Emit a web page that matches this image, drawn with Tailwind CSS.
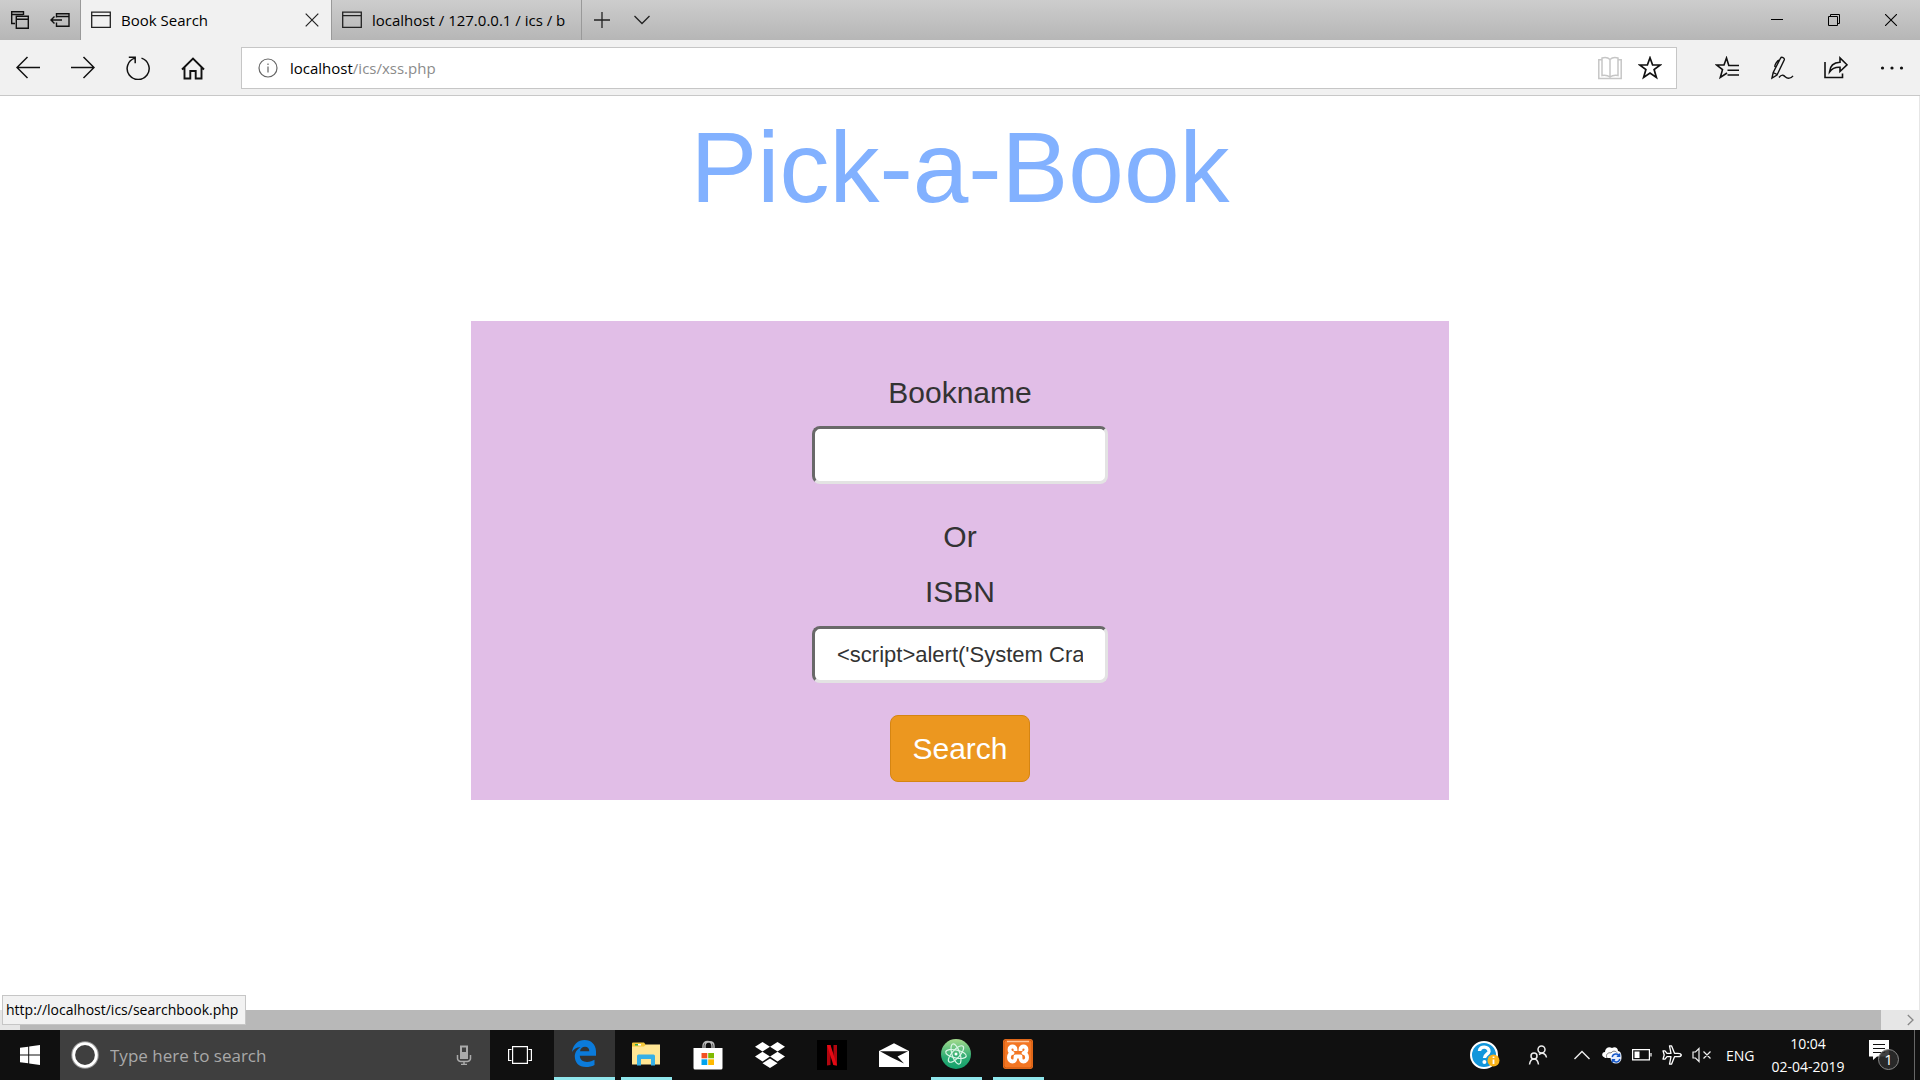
<!DOCTYPE html>
<html lang="en">
<head>
<meta charset="utf-8">
<title>Book Search</title>
<meta name="viewport" content="width=device-width, initial-scale=1">
<script src="https://cdn.jsdelivr.net/npm/@tailwindcss/browser@4"></script>
</head>
<body class="flex min-h-screen flex-col bg-white font-['Open_Sans','Noto_Sans',sans-serif] text-[14px] text-black">

<!-- Tab strip -->
<header class="text-[15px]">
  <div class="flex h-10 items-stretch bg-linear-to-b from-[#cdcdcd] to-[#b6b6b6]">
    <div class="flex w-20 items-center justify-between pr-2 pl-2">
      <button class="flex size-6 items-center justify-center" aria-label="Tabs you've set aside">
        <svg class="size-5" viewBox="0 0 20 20" fill="none" stroke="#111" stroke-width="1.4"><path d="M5 13.5H1.7V1.7H13.5V5M1.7 4.5H13"/><path d="M6.3 6.3H18.3V18.3H6.3ZM6.3 9.2H18.3"/></svg>
      </button>
      <button class="flex size-6 items-center justify-center" aria-label="Set these tabs aside">
        <svg class="size-5" viewBox="0 0 20 20" fill="none" stroke="#111" stroke-width="1.4"><path d="M6.500 7.500V3.700H19V16.300H6.500V12.500M6.500 6.500H19M1 10H12M4.500 6.500L1 10L4.500 13.500"/></svg>
      </button>
    </div>
    <div class="flex w-[251px] items-center border-l border-[#999] bg-[#f1f1f1] pr-[9px] pl-[10px]">
      <svg class="h-[18px] w-5 shrink-0" viewBox="0 0 20 18" fill="none" stroke="#222" stroke-width="1.3"><path d="M.7 1.200H19.300V16.300H.7ZM.7 4.600H19.300"/></svg>
      <span class="ml-[10px] flex-1 truncate">Book Search</span>
      <button class="flex size-5 items-center justify-center" aria-label="Close tab">
        <svg class="size-[14px]" viewBox="0 0 14 14" stroke="#222" stroke-width="1.2"><path d="M.7.7L13.300 13.300M13.300.7L.7 13.300"/></svg>
      </button>
    </div>
    <div class="flex w-[251px] items-center border-x border-[#999] pr-[10px] pl-[10px]">
      <svg class="h-[18px] w-5 shrink-0" viewBox="0 0 20 18" fill="none" stroke="#222" stroke-width="1.3"><path d="M.7 1.200H19.300V16.300H.7ZM.7 4.600H19.300"/></svg>
      <span class="ml-[10px] flex-1 overflow-hidden whitespace-nowrap">localhost / 127.0.0.1 / ics / b</span>
    </div>
    <button class="flex w-10 items-center justify-center" aria-label="New tab">
      <svg class="size-4" viewBox="0 0 16 16" stroke="#222" stroke-width="1.3"><path d="M8 0V16M0 8H16"/></svg>
    </button>
    <button class="flex w-10 items-center justify-center" aria-label="Show tab previews">
      <svg class="size-4" viewBox="0 0 16 16" fill="none" stroke="#222" stroke-width="1.3"><path d="M.5 4L8 11.500L15.500 4"/></svg>
    </button>
    <div class="ml-auto flex pr-px">
      <button class="flex w-[57px] items-center justify-center" aria-label="Minimize"><svg class="size-3" viewBox="0 0 12 12" stroke="#000" stroke-width="1"><path d="M0 5.500H12"/></svg></button>
      <button class="flex w-[57px] items-center justify-center" aria-label="Restore"><svg class="size-3" viewBox="0 0 12 12" fill="none" stroke="#000" stroke-width="1"><path d="M.5 2.500H9.500V11.500H.5ZM2.500 2.500V.5H11.500V9.500H9.500"/></svg></button>
      <button class="flex w-[57px] items-center justify-center" aria-label="Close"><svg class="size-3" viewBox="0 0 12 12" stroke="#000" stroke-width="1.1"><path d="M0 0L12 12M12 0L0 12"/></svg></button>
    </div>
  </div>

  <!-- Navigation bar -->
  <div class="flex h-14 items-center border-b border-[#c8c8c8] bg-[#f1f1f1]">
    <nav class="flex" aria-label="Browser navigation">
      <button class="flex h-10 w-[55px] items-center justify-center" aria-label="Back"><svg class="size-6" viewBox="0 0 24 24" fill="none" stroke="#111" stroke-width="1.5"><path d="M24 11.500H1M11.500 1L1 11.500L11.500 22"/></svg></button>
      <button class="flex h-10 w-[55px] items-center justify-center" aria-label="Forward"><svg class="size-6" viewBox="0 0 24 24" fill="none" stroke="#111" stroke-width="1.5"><path d="M0 11.500H23M12.500 1L23 11.500L12.500 22"/></svg></button>
      <button class="flex h-10 w-[55px] items-center justify-center" aria-label="Refresh"><svg class="size-6" viewBox="0 0 24 24" fill="none" stroke="#111" stroke-width="1.500"><path d="M15.500 2.100A11 11 0 1 1 8.800 2.100M2.800 1.200H9.200V7.200"/></svg></button>
      <button class="flex h-10 w-[55px] items-center justify-center" aria-label="Home"><svg class="size-6" viewBox="0 0 24 24" fill="none" stroke="#111" stroke-width="1.900"><path d="M1 13.500L12 2.500L23 13.500M3.500 11.500V22.500H9.300V15H14.700V22.500H20.500V11.500"/></svg></button>
    </nav>
    <form class="ml-[21px] flex h-[42px] flex-1 items-center border border-[#c6c6c6] bg-white">
      <button type="button" class="ml-4 flex size-5 items-center justify-center" aria-label="Site information"><svg class="size-5" viewBox="0 0 20 20" fill="none" stroke="#666" stroke-width="1.200"><circle cx="10" cy="10" r="9"/><path d="M10 8.500V14.500M10 5.500V7"/></svg></button>
      <div class="ml-3 flex-1 pt-0.5" role="textbox" aria-label="Address" contenteditable="true" spellcheck="false">localhost<span class="text-[#8b8b8b]">/ics/xss.php</span></div>
      <button type="button" class="flex w-10 items-center justify-center" aria-label="Reading view"><svg class="size-6" viewBox="0 0 24 24" fill="none" stroke="#c6c6c6" stroke-width="1.500"><path d="M12 3.500C10 1.500 6 1.500 4 2V19.500C7 19 10 19.500 12 21C14 19.500 17 19 20 19.500V2C18 1.500 14 1.500 12 3.500V21M4 3.800H.8V22.500H23.200V3.800H20"/></svg></button>
      <button type="button" class="mr-[6px] flex w-10 items-center justify-center" aria-label="Add to favorites"><svg class="size-6" viewBox="0 0 24 24" fill="none" stroke="#111" stroke-width="1.700"><path d="M12 1.800L14.600 9H22.300L16.100 13.600L18.400 21.500L12 17L5.600 21.500L7.900 13.600L1.700 9H9.400Z"/></svg></button>
    </form>
    <div class="ml-[22px] flex">
      <button class="flex h-10 w-[55px] items-center justify-center" aria-label="Hub"><svg class="size-6" viewBox="0 0 24 24" fill="none" stroke="#111" stroke-width="1.600"><path d="M24 9.500H13.800L11.500 2L9 9H1.500L7.500 13.600L5.300 21.500L12 17M12.500 14.200H24M12.500 19H24"/></svg></button>
      <button class="flex h-10 w-[55px] items-center justify-center" aria-label="Add notes"><svg class="size-6" viewBox="0 0 24 24" fill="none" stroke="#111" stroke-width="1.400"><path d="M2 22L3.200 16.500L10.500 2.300C11.500 .3 15 1.700 14.200 4L7 19L2 22ZM3.200 16.500L7 18.500M5 11C4.200 9.500 7 4.500 9.500 4M9 21.500C12 17.500 14 19.500 15.500 21C17.500 23 21 22.500 23 19.800"/></svg></button>
      <button class="flex h-10 w-[54px] items-center justify-center" aria-label="Share"><svg class="size-6" viewBox="0 0 24 24" fill="none" stroke="#111" stroke-width="1.600"><path d="M1 6V21.500H18.500V17.500M5.500 16C6 10 10 6.500 16 6.300V2L23 8.800L16 15.500V11.300C11 11 8 12.500 5.500 16Z"/></svg></button>
      <button class="flex h-10 w-[57px] items-center justify-center" aria-label="Settings and more"><svg class="size-6" viewBox="0 0 24 24" fill="#111"><circle cx="2.500" cy="12" r="1.600"/><circle cx="12" cy="12" r="1.600"/><circle cx="21.500" cy="12" r="1.600"/></svg></button>
    </div>
  </div>
</header>

<!-- Web page -->
<main class="flex flex-1 flex-col items-center pt-4 font-['Liberation_Sans',Arial,sans-serif] text-[30px] leading-[43px] text-[#333] shadow-[inset_-1px_0_#e6e6e6]">
  <h1 class="text-[100px] leading-[110px] text-[#82b1ff]">Pick-a-Book</h1>
  <form class="mt-[99px] flex w-[50.9%] flex-col items-center bg-[#e1bee7] pt-[50px] pb-[18px]">
    <label for="bookname">Bookname</label>
    <input id="bookname" type="text" class="mt-3 h-[58px] w-[296px] rounded-lg border-3 border-t-[#696969] border-r-[#e3e3e3] border-b-[#e3e3e3] border-l-[#696969] bg-white px-[22px] text-[22px]">
    <p class="mt-[31px]">Or</p>
    <label for="isbn" class="mt-3">ISBN</label>
    <input id="isbn" type="text" value="&lt;script&gt;alert('System Crash')&lt;/script&gt;" class="mt-[13px] h-[57px] w-[296px] rounded-lg border-3 border-t-[#696969] border-r-[#e3e3e3] border-b-[#e3e3e3] border-l-[#696969] bg-white px-[22px] text-[22px]">
    <button type="button" class="mt-8 h-[67px] rounded-lg border border-[#d58512] bg-[#ec971f] px-[21px] text-white">Search</button>
  </form>
</main>

<!-- Horizontal scrollbar, with the link preview over its left end -->
<div class="relative flex h-5 bg-[#e6e6e6] pl-5">
  <div class="flex-1 bg-[#b8b8b8]"></div>
  <button class="flex w-[39px] items-center justify-end pr-[6px]" aria-label="Scroll right"><svg class="h-3 w-[7px]" viewBox="0 0 7 12" fill="none" stroke="#888" stroke-width="1.300"><path d="M.8 1L6 6L.8 11"/></svg></button>
  <div class="absolute bottom-[5px] left-[2px] flex h-[30px] items-center border border-[#c6c6c6] bg-[#f2f2f2] pr-[7px] pb-0.5 pl-[3px]">http://localhost/ics/searchbook.php</div>
</div>

<!-- Taskbar -->
<footer class="flex h-[50px] items-stretch bg-[#101010] text-white">
  <button class="flex w-[60px] items-center justify-center" aria-label="Start"><svg class="size-5" viewBox="0 0 20 20" fill="#fff"><path d="M0 2.800L8.200 1.700V9.500H0ZM9.200 1.500L20 0V9.500H9.200ZM0 10.500H8.200V18.300L0 17.200ZM9.200 10.500H20V20L9.200 18.500Z"/></svg></button>
  <div class="flex w-[430px] items-center bg-[#3f3f3f] pr-4 pl-[11px]">
    <svg class="size-7 shrink-0" viewBox="0 0 28 28" fill="none"><circle cx="14" cy="14" r="12.500" stroke="#999" stroke-width="2.500"/><circle cx="14" cy="14" r="11.300" stroke="#fff" stroke-width="2.800"/></svg>
    <input type="text" aria-label="Type here to search" placeholder="Type here to search" class="ml-[11px] min-w-0 flex-1 pt-0.5 text-[17px] placeholder:text-[#a9a9a9]">
    <button class="flex size-5 items-center justify-center" aria-label="Voice search"><svg class="h-5 w-4" viewBox="0 0 16 20" fill="none" stroke="#aaa"><path d="M4 .5H12V14H4Z" fill="#aaa" stroke="none"/><path d="M6 2.500H10V7H6Z" fill="#3f3f3f" stroke="none"/><path d="M1.500 10V13.500C1.500 15.500 2.500 16 4.500 16.500H11.500C13.500 16 14.500 15.500 14.500 13.500V10M8 16.500V19M5 19.500H11" stroke-width="1.500"/></svg></button>
  </div>
  <button class="flex w-16 items-center justify-center pr-1" aria-label="Task view"><svg class="h-5 w-6 " viewBox="0 0 24 20" fill="none" stroke="#fff" stroke-width="1.200"><path d="M4.600 1.600H19.400V18.400H4.600ZM3.500 4.500H.6V15.500H3.500M20.500 4.500H23.400V15.500H20.500"/></svg></button>

  <div class="flex gap-[11px] [&>button]:pr-0.5">
    <button class="flex w-[61px] items-center justify-center border-b-3 border-[#8fe6ec] bg-[#333]" aria-label="Microsoft Edge"><svg class="h-[27px] w-6" viewBox="0 0 24 27" fill="#0b7bdb"><path d="M0 12C1 4.500 6 0 12.500 0C20 0 24.300 5.500 24 12.500V15.800H7.800C8 20 11 22 15 22C18 22 20.500 21 22.500 19.800V25C20 26.400 17 27 14 27C6.500 27 2.800 22.300 2.800 16.500C2.800 12.500 5 9 8.600 7.200C5 7 2 8.500 0 12ZM8 11.200H17.300C17.300 8.500 15.800 6.800 13 6.800C10.300 6.800 8.300 8.700 8 11.200Z"/></svg></button>
    <button class="-ml-[5px] flex w-[51px] items-center justify-center border-b-3 border-[#8fe6ec]" aria-label="File Explorer"><svg class="h-6 w-7" viewBox="0 0 28 24"><path d="M0 1.500Q0 .5 1 .5H12L14 3H28V22H0Z" fill="#f5c93a"/><path d="M0 4.500H12L14 2.500H28V22.500H0Z" fill="#ffe694"/><path d="M3 2H6.500V3.500H3Z" fill="#35a853"/><path d="M6 2H9V3.500H6Z" fill="#fff"/><path d="M5 23.500V14Q5 12.500 6.500 12.500H21.500Q23 12.500 23 14V23.500H19V17H9V23.500Z" fill="#36b0e6"/></svg></button>
    <button class="flex w-[51px] items-center justify-center" aria-label="Microsoft Store"><svg class="h-[30px] w-[30px]" viewBox="0 0 30 30" fill="none"><path d="M10 9V6C10 0 19 0 19 6V9M12 9V5.500C12.500 .5 21 .5 21 6V9" stroke="#bbb" stroke-width="1.400"/><path d="M.5 8H29.500V28Q29.500 29.500 28 29.500H2Q.5 29.500 .5 28Z" fill="#fff"/><path d="M8.500 13H14.300V18.300H8.500Z" fill="#f25022"/><path d="M15.200 13H21V18.300H15.200Z" fill="#7fba00"/><path d="M8.500 19.300H14.300V25H8.500Z" fill="#00a4ef"/><path d="M15.200 19.300H21V25H15.200Z" fill="#ffb900"/></svg></button>
    <button class="flex w-[51px] items-center justify-center" aria-label="Dropbox"><svg class="h-[26px] w-[30px]" viewBox="0 0 30 26" fill="#fff"><path d="M7.500 0L15 4.800L7.500 9.500L0 4.800ZM22.500 0L30 4.800L22.500 9.500L15 4.800ZM7.500 9.800L15 14.600L7.500 19.400L0 14.600ZM22.500 9.800L30 14.600L22.500 19.400L15 14.600ZM15 16.500L22.500 21.200L15 26L7.500 21.200Z"/></svg></button>
    <button class="flex w-[51px] items-center justify-center" aria-label="Netflix"><svg class="size-[30px]" viewBox="0 0 30 30"><path d="M0 0H30V30H0Z" fill="#000"/><path d="M10 5H13.500V25L10 25.500ZM16.500 5H20V25.500L16.500 25Z" fill="#b1060f"/><path d="M10 5H13.500L20 25.500L16.300 25Z" fill="#e50914"/></svg></button>
    <button class="flex w-[51px] items-center justify-center" aria-label="Mail"><svg class="h-6 w-[30px]" viewBox="0 0 30 24"><path d="M0 8L15 .3L30 8V24H0Z" fill="#fff"/><path d="M1 8.200H29L18.500 13.500L25 20.500L12 14.200Z" fill="#101010"/></svg></button>
    <button class="flex w-[51px] items-center justify-center border-b-3 border-[#8fe6ec]" aria-label="Atom"><svg class="size-[30px]" viewBox="0 0 30 30" fill="none"><defs><linearGradient id="atom" x2="0" y2="1"><stop stop-color="#a6dc8e"/><stop offset=".6" stop-color="#2eac73"/><stop offset="1" stop-color="#13a06c"/></linearGradient></defs><circle cx="15" cy="15" r="15" fill="url(#atom)"/><g stroke="#d9f5e6" stroke-width="1.200"><ellipse cx="15" cy="15" rx="10.500" ry="4" transform="rotate(12 15 15)"/><ellipse cx="15" cy="15" rx="10.500" ry="4" transform="rotate(72 15 15)"/><ellipse cx="15" cy="15" rx="10.500" ry="4" transform="rotate(132 15 15)"/></g><circle cx="15" cy="15" r="1.500" fill="#fff"/></svg></button>
    <button class="flex w-[51px] items-center justify-center border-b-3 border-[#8fe6ec]" aria-label="XAMPP"><svg class="size-[30px]" viewBox="0 0 30 30" fill="none"><rect width="30" height="30" rx="3" fill="#f37623"/><rect x="1" y="1" width="28" height="28" rx="2.500" stroke="#c9560f"/><path d="M4 2.500H26" stroke="#ffc79b" stroke-width="1.500"/><path d="M12.500 12V10.500C12.500 6.500 6.500 6.500 6.500 10.500C6.500 12.500 7.500 13.500 9.500 14C4.500 15 5 22.500 9.500 22.500C12.500 22.500 12.500 20 12.500 17.500H17.500C17.500 20 17.500 22.500 20.500 22.500C25 22.500 25.500 15 20.500 14C22.500 13.500 23.500 12.500 23.500 10.500C23.500 6.500 17.500 6.500 17.500 10.500V12" stroke="#fff" stroke-width="3.800" stroke-linejoin="round"/></svg></button>
  </div>

  <div class="ml-auto flex items-center">
    <button class="mr-[21px] flex w-8 justify-center" aria-label="Help"><svg class="size-[30px]" viewBox="0 0 30 30" fill="none"><circle cx="14" cy="15" r="13" fill="#1296db" stroke="#fff" stroke-width="2"/><path d="M9.500 11C9.500 5.500 19.500 6 19 11.500C18.500 14.500 14.500 14.500 14.500 18" stroke="#fff" stroke-width="3.400"/><circle cx="14.400" cy="22" r="2" fill="#fff"/><circle cx="23.500" cy="20.500" r="6" fill="#f9b31b"/><path d="M23.500 19.500V24M23.500 16.500V18" stroke="#fff" stroke-width="1.800"/></svg></button>
    <button class="mr-[18px] flex w-8 justify-center" aria-label="People"><svg class="size-5" viewBox="0 0 20 20" fill="none" stroke="#eee" stroke-width="1.500"><circle cx="13.500" cy="4.500" r="3.500"/><circle cx="6" cy="11" r="3"/><path d="M1.500 19.500C2 16 3.500 14 6 14C8.500 14 10 16 10.500 19.500M11 9.500C15 7 18 9 18.500 12.500"/></svg></button>
    <button class="mr-[10px] flex w-5 justify-center" aria-label="Show hidden icons"><svg class="h-[10px] w-4" viewBox="0 0 16 10" fill="none" stroke="#eee" stroke-width="1.400"><path d="M.5 9L8 1.500L15.500 9"/></svg></button>
    <button class="mr-[10px] flex w-5 justify-center" aria-label="OneDrive"><svg class="h-[18px] w-5" viewBox="0 0 20 18" fill="none"><path d="M2 11C-1 10 0 6 3 6C3 2 7 0 10 2C13 0 16 2 16 5C19 5 20 9 19 12H3Z" fill="#fff"/><path d="M5 12C3 8 7 6 9 7C11 4 15 5 15.500 8" stroke="#777"/><circle cx="14" cy="12" r="5.500" fill="#e7eefb"/><path d="M10.200 11C11 7.500 15.500 7 17.200 9.800M17.600 7.500V10.200H14.800M17.800 13C17 16.500 12.500 17 10.800 14.200M10.400 16.500V13.800H13.200" stroke="#1557c7" stroke-width="1.400"/></svg></button>
    <button class="mr-[10px] flex w-5 justify-center" aria-label="Battery"><svg class="h-3 w-5" viewBox="0 0 20 12" fill="none"><path d="M.6 .6H17.400V10.900H.6ZM19 4V7.500" stroke="#fff" stroke-width="1.200"/><path d="M2.500 2.500H7.500V9H2.500Z" fill="#fff"/></svg></button>
    <button class="mr-[10px] flex w-5 justify-center" aria-label="Airplane mode"><svg class="size-5" viewBox="0 0 20 20" fill="none" stroke="#fff" stroke-width="1.300" stroke-linejoin="round"><path d="M19.300 10C19 8.500 17.500 8.300 16 8.300H12.500L9.500 .8H7.500L9 8.300H5L3 5.800H1L2.200 10L1 14.200H3L5 11.700H9L7.500 19.200H9.500L12.500 11.700H16C17.500 11.700 19 11.500 19.300 10Z"/></svg></button>
    <button class="mr-[14px] flex w-5 justify-center" aria-label="Volume muted"><svg class="h-4 w-5" viewBox="0 0 20 16" fill="none" stroke="#eee" stroke-width="1.200"><path d="M1 5H3.500L7 1.500V14.500L3.500 11H1ZM11.500 4.500L18.500 11.500M18.500 4.500L11.500 11.500"/></svg></button>
    <button class="w-7">ENG</button>
    <button class="mx-4 w-[76px] text-center leading-[23px] whitespace-nowrap">10:04<br>02-04-2019</button>
    <button class="relative ml-[7px] flex size-[30px] items-start" aria-label="Notifications, 1 new">
      <svg class="h-5 w-5" viewBox="0 0 20 20" fill="#fff"><path d="M0 0H20V16.500H8L4 20V16.500H0Z"/><path d="M4 4.500H16M4 8.500H16M4 12.500H16" stroke="#101010" stroke-width="1.200"/></svg>
      <span class="absolute top-[9px] left-[9px] flex size-[21px] items-center justify-center rounded-full border border-[#888] bg-[#2b2b2b]/90 text-[15px] leading-none">1</span>
    </button>
    <button class="ml-[15px] h-full w-[6px] border-l border-[#666]" aria-label="Show desktop"></button>
  </div>
</footer>
</body>
</html>
